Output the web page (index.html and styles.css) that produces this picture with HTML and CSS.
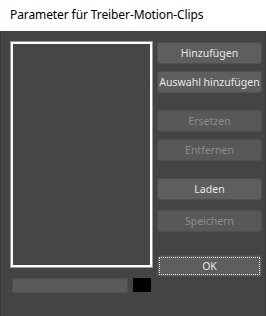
FILE: index.html
```html
<!DOCTYPE html>
<html lang="de">
  <head>
    <meta charset="UTF-8" />
    <meta name="viewport" content="width=device-width, initial-scale=1.0" />
    <title>Parameter für Treiber-Motion-Clips</title>
    <link rel="stylesheet" href="styles.css">
  </head>
  <body>
    <div class="window">
      <div class="titlebar">Parameter für Treiber-Motion-Clips</div>
      <div class="dialog">
        <div class="left">
          <div class="clip-list"></div>
          <div class="status">
            <div class="progress"></div>
            <div class="swatch"></div>
          </div>
        </div>
        <div class="buttons">
          <button class="btn">Hinzufügen</button>
          <button class="btn gap-s">Auswahl hinzufügen</button>
          <button class="btn gap-l" disabled>Ersetzen</button>
          <button class="btn gap-s" disabled>Entfernen</button>
          <button class="btn gap-l">Laden</button>
          <button class="btn gap-m" disabled>Speichern</button>
          <button class="btn ok">OK</button>
        </div>
      </div>
    </div>
  </body>
</html>
```

FILE: styles.css
```css
html, body {
  margin: 0;
  padding: 0;
}
body {
  width: 266px;
  height: 316px;
  background: #444444;
  font-family: "Noto Sans", "Open Sans", sans-serif;
  font-size: 12px;
  overflow: hidden;
}
.window {
  height: 316px;
  box-sizing: border-box;
  border-left: 1px solid #3a3a3a;
  border-right: 1px solid #3a3a3a;
}
.titlebar {
  height: 31px;
  line-height: 30px;
  background: #fff;
  color: #000;
  margin: 0 -1px;
  padding-left: 10px;
  letter-spacing: -0.1px;
}
.dialog {
  display: flex;
  gap: 4px;
  padding: 10px 0 0 9px;
}
.clip-list {
  width: 143px;
  height: 227px;
  box-sizing: border-box;
  border: 1px solid #9a9a9a;
  box-shadow: inset 0 0 0 2px #fff;
  background: #464646;
}
.status {
  display: flex;
  gap: 5px;
  margin-top: 10px;
  padding-left: 2px;
}
.progress {
  width: 116px;
  height: 15px;
  box-sizing: border-box;
  background: #5a5a5a;
  border: 1px solid #4e4e4e;
}
.swatch {
  width: 18px;
  height: 14px;
  background: #000;
}
.buttons {
  display: flex;
  flex-direction: column;
  padding-top: 1px;
}
.btn {
  width: 105px;
  height: 22px;
  padding: 0;
  border: 1px solid #4f4f4f;
  border-radius: 3px;
  background: #5e5e5e;
  color: #e6e6e6;
  font-family: inherit;
  font-size: 10.5px;
  white-space: nowrap;
}
.btn:disabled {
  color: #8c8c8c;
  background: #585858;
}
.gap-s {
  margin-top: 7px;
}
.gap-m {
  margin-top: 10px;
}
.gap-l {
  margin-top: 17px;
}
.ok {
  margin-top: 23px;
  outline: 1px dotted #e8e8e8;
  outline-offset: -3px;
}
```
